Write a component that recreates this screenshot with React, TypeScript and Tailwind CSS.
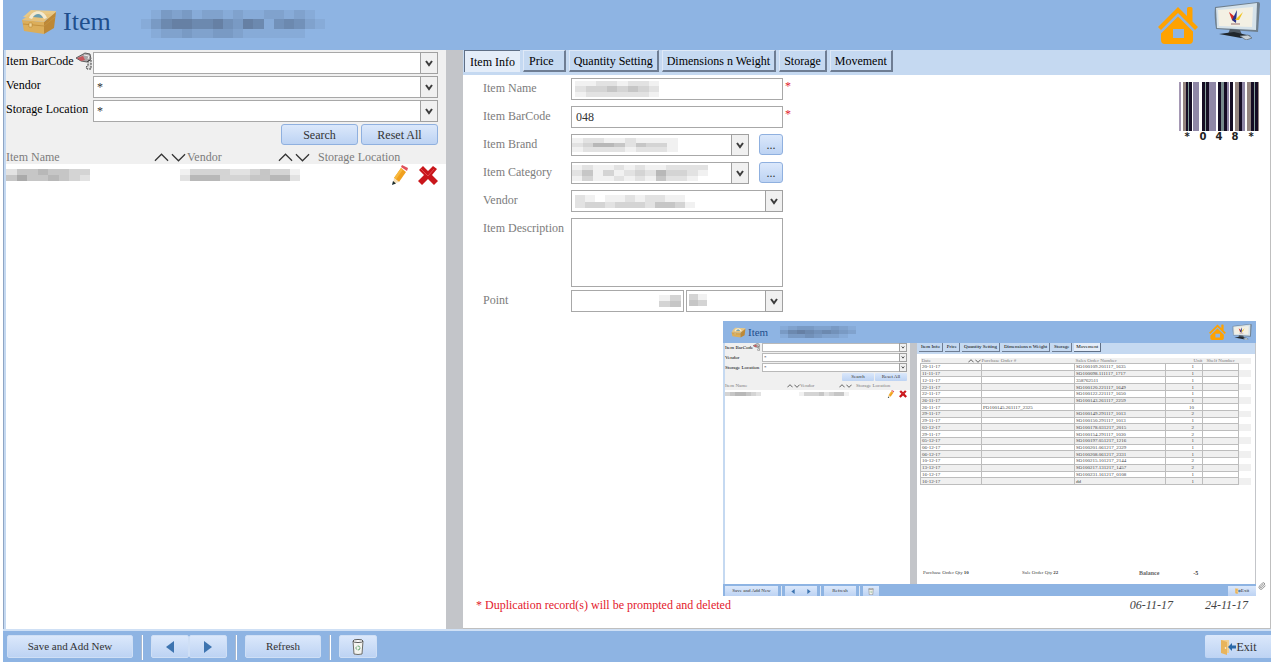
import clsx from "clsx";
import { Paperclip } from "lucide-react";
import { ReactNode, useState } from "react";

const tabs = [
  "Item Info",
  "Price",
  "Quantity Setting",
  "Dimensions n Weight",
  "Storage",
  "Movement",
];

const movements = [
  ["20-11-17", "", "SO100109.201117_1635", "1"],
  ["11-11-17", "", "SO100098.111117_1717", "1"],
  ["12-11-17", "", "358762511", "1"],
  ["22-11-17", "", "SO100120.221117_1649", "1"],
  ["22-11-17", "", "SO100122.221117_1650", "1"],
  ["26-11-17", "", "SO100143.261117_2259", "1"],
  ["26-11-17", "PO100145.261117_2325", "", "10"],
  ["29-11-17", "", "SO100149.291117_1013", "2"],
  ["29-11-17", "", "SO100150.291117_1013", "1"],
  ["03-12-17", "", "SO100178.031217_2015", "2"],
  ["29-11-17", "", "SO100154.291117_1030", "2"],
  ["05-12-17", "", "SO100197.051217_1216", "1"],
  ["06-12-17", "", "SO100201.061217_2329", "1"],
  ["06-12-17", "", "SO100208.061217_2331", "1"],
  ["10-12-17", "", "SO100215.101217_2144", "2"],
  ["13-12-17", "", "SO100217.131217_1457", "2"],
  ["16-12-17", "", "SO100231.161217_0108", "1"],
  ["16-12-17", "", "dd", "1"],
];

// x, width, colour
const bars: [number, number, string][] = [
  [0, 2, "#a598b4"],
  [4, 3, "#94857f"],
  [7, 2, "#150d24"],
  [9, 1, "#7d9a94"],
  [10, 3, "#150d24"],
  [14, 6, "#8f87a6"],
  [23, 3, "#150d24"],
  [26, 1, "#86a09a"],
  [27, 3, "#150d24"],
  [30, 7, "#8f87a6"],
  [39, 3, "#150d24"],
  [42, 3, "#768b8c"],
  [45, 3, "#150d24"],
  [48, 2, "#8f87a6"],
  [51, 3, "#150d24"],
  [56, 4, "#94857f"],
  [60, 3, "#150d24"],
  [63, 3, "#8f87a6"],
  [68, 4, "#94857f"],
  [72, 3, "#150d24"],
  [75, 1, "#86a09a"],
  [76, 3, "#150d24"],
  [79, 1, "#94857f"],
];

// Each digit is the darkness of one cell
function Mosaic({
  rows,
  className,
  color = "#555555",
}: {
  rows: string[];
  className?: string;
  color?: string;
}) {
  return (
    <svg
      viewBox={`0 0 ${rows[0].length} ${rows.length}`}
      preserveAspectRatio="none"
      shapeRendering="crispEdges"
      className={clsx("pointer-events-none", className)}
      aria-hidden="true"
    >
      {rows.map((row, y) =>
        row
          .split("")
          .map((cell, x) => (
            <rect
              key={`${x}-${y}`}
              x={x}
              y={y}
              width="1"
              height="1"
              fill={color}
              opacity={Number(cell) / 12}
            />
          )),
      )}
    </svg>
  );
}

function ToolboxIcon({ className }: { className?: string }) {
  return (
    <svg viewBox="0 0 36 27" className={className} aria-hidden="true">
      <path d="M2 9 10 2l25 1-2 8z" fill="#e9c987" />
      <path d="M1 12 23 14 23 26 3 23z" fill="#dcae5a" />
      <path d="M23 14 35 4 33 20 23 26z" fill="#bd8836" />
      <path d="M1 12 9 6 31 6 23 14z" fill="#e8c27a" />
      <path d="M8 10C11 1 23 1 26 10l-3 1C20 5 14 5 11 11z" fill="#f4ead0" />
      <path d="M12 9C15 5 20 5 22 10z" fill="#6e9fae" />
      <path d="M2 16 23 18 34 9" fill="none" stroke="#c4923f" />
      <path d="M8 15h3v4H8z" fill="#efd596" stroke="#b07c2c" strokeWidth=".5" />
    </svg>
  );
}

function HomeIcon({ className }: { className?: string }) {
  return (
    <svg viewBox="0 0 40 38" className={className} aria-hidden="true">
      <path
        d="M20 1 29 10V2.500Q29 1 30.500 1H33Q34.500 1 34.500 2.500V15.500L40 21 37 24 20 7 3 24 0 21z"
        fill="#ffa200"
      />
      <path
        d="M20 10.500 35 25.500V34Q35 38 31 38H7Q3 38 3 34V27.500zM15 23V32H26V23Z"
        fill="#ffa200"
        fillRule="evenodd"
      />
    </svg>
  );
}

function MonitorIcon({ className }: { className?: string }) {
  return (
    <svg viewBox="0 0 46 38" className={className} aria-hidden="true">
      <path d="M1 5 44 0Q46 0 46 2L44 30 2 27Q0 14 1 5z" fill="#6f7f8d" />
      <path d="M2 6 43 1 42 28 3 26z" fill="#d5e2ea" />
      <path d="M4 8 39 5 38 25 5 24z" fill="#f3f0e4" />
      <path d="m15 10 6 5v5l-3-2z" fill="#d62b22" />
      <path d="m23 8-1 13-4-3z" fill="#27348a" />
      <path d="m21 18 8-8-4 8z" fill="#f1c21a" />
      <path d="M17 22h9" stroke="#9a6f6f" />
      <path d="m16 27 10 1 2 5-14-1z" fill="#4d5761" />
      <path d="M5 32 20 30 37 34 27 36z" fill="#20262b" />
      <path d="m26 34 8-1 4 3-6 2z" fill="#c7d0d6" stroke="#5c666e" strokeWidth=".7" />
    </svg>
  );
}

function ScannerIcon({ className }: { className?: string }) {
  return (
    <svg viewBox="0 0 16 18" className={className} aria-hidden="true">
      <path d="M0 6 9 1l5 1 1 5-4 3-6-1z" fill="#a9a6a8" stroke="#444" strokeWidth=".8" />
      <path d="m1 6 6-2 2 4-4 1z" fill="#c9565c" />
      <path d="m8 3 5 1-1 3" fill="none" stroke="#eee" />
      <path d="m12 9 3-1v9h-4l-1-2 2-1z" fill="#ddd" stroke="#333" strokeDasharray="2 1" />
    </svg>
  );
}

function PencilIcon({ className }: { className?: string }) {
  return (
    <svg viewBox="0 0 16 20" className={className} aria-hidden="true">
      <path d="m9 3 5 4-7 10-5-4z" fill="#f0a01e" />
      <path d="m9 3 2 1.500-7 10L2 13z" fill="#f8b83c" />
      <path d="m9 2 1-2 6 3-1 3z" fill="#e0525c" />
      <path d="m2 13 5 4-6 2z" fill="#f5dfb8" />
      <path d="m1 16 3 2.500L0 20z" fill="#1b2b2b" />
    </svg>
  );
}

function DeleteIcon({ className }: { className?: string }) {
  return (
    <svg viewBox="0 0 20 19" className={className} aria-hidden="true">
      <path
        d="M1 4 5 0 10 5 15 0 19 3 14 9 20 15 16 19 10 13 4 19 0 15 6 9z"
        fill="#c9161b"
      />
      <path d="m3 3 7 7 6-7" fill="none" stroke="#e2494c" />
    </svg>
  );
}

function TrashIcon({ className }: { className?: string }) {
  return (
    <svg viewBox="0 0 12 16" className={className} aria-hidden="true">
      <path d="M1 2 2 15q4 1 8 0l1-13z" fill="#f4f4f0" stroke="#6d6d68" />
      <ellipse cx="6" cy="2" rx="5" ry="1.500" fill="#fff" stroke="#555" />
      <circle cx="6" cy="9" r="2" fill="none" stroke="#62a36c" strokeDasharray="3 1" />
    </svg>
  );
}

function ExitIcon({ className }: { className?: string }) {
  return (
    <svg viewBox="0 0 16 16" className={className} aria-hidden="true">
      <path d="M1 1h8v13H1z" fill="#f0cf93" />
      <path d="m1 1 6 2v13l-6-2z" fill="#e8b45c" />
      <circle cx="5.500" cy="9" r=".8" fill="#fff" />
      <path d="m8 8 4-4v2.500h4v3h-4V12z" fill="#2b69a8" />
    </svg>
  );
}

function ArrowIcon({ back, className }: { back?: boolean; className?: string }) {
  return (
    <svg viewBox="0 0 8 12" className={className} aria-hidden="true">
      <path d={back ? "M8 0v12L0 6z" : "M0 0v12l8-6z"} fill="#3d74b0" />
    </svg>
  );
}

function SortArrows({ mini }: { mini?: boolean }) {
  return (
    <span className={clsx("flex", mini ? "gap-px" : "gap-[2px]")}>
      {["m1 8 7-7 7 7", "m1 1 7 7 7-7"].map((d) => (
        <button key={d} type="button" aria-label="Sort">
          <svg
            viewBox="0 0 16 9"
            className={mini ? "h-1 w-[6px]" : "h-[9px] w-[15px]"}
          >
            <path d={d} fill="none" stroke="#333" strokeWidth={mini ? 2 : 1.3} />
          </svg>
        </button>
      ))}
    </span>
  );
}

function SelectBox({
  id,
  label,
  value = "",
  mini,
  className,
  children,
}: {
  id?: string;
  label?: string;
  value?: string;
  mini?: boolean;
  className?: string;
  children?: ReactNode;
}) {
  return (
    <div className={clsx("relative", mini ? "h-[9px]" : "h-[22px]", className)}>
      <select
        id={id}
        aria-label={label}
        className={clsx(
          "block h-full w-full appearance-none border bg-white text-[#333]",
          mini ? "border-[#b9b9b9] px-px" : "border-[#a8a8a8] px-[3px]",
        )}
      >
        <option>{value}</option>
      </select>
      {children}
      <span
        className={clsx(
          "pointer-events-none absolute inset-y-0 right-0 flex items-center justify-center border border-[#a0a0a0] bg-[#f0f0f0]",
          mini ? "w-2" : "w-[18px]",
        )}
      >
        <svg
          viewBox="0 0 8 7"
          className={mini ? "h-[3px] w-1" : "h-[7px] w-2"}
          aria-hidden="true"
        >
          <path d="m1 1 3 4 3-4" fill="none" stroke="#3c3c3c" strokeWidth="2" />
        </svg>
      </span>
    </div>
  );
}

function BlueButton({
  children,
  className,
  label,
}: {
  children: ReactNode;
  className?: string;
  label?: string;
}) {
  return (
    <button
      type="button"
      aria-label={label}
      className={clsx(
        "flex items-center justify-center bg-gradient-to-b from-[#dbe8fb] to-[#bdd3f3] text-[#333]",
        className,
      )}
    >
      {children}
    </button>
  );
}

function TabBar({ mini, initial }: { mini?: boolean; initial: string }) {
  const [active, setActive] = useState(initial);

  return (
    <div
      role="tablist"
      className={clsx(
        "flex bg-[#c5d9f1]",
        mini ? "h-[11px] gap-[2px] pl-[2px]" : "h-[25px] gap-[3px] pl-px",
      )}
    >
      {tabs.map((tab) => (
        <button
          key={tab}
          type="button"
          role="tab"
          aria-selected={tab === active}
          onClick={() => setActive(tab)}
          className={clsx(
            "whitespace-nowrap text-black",
            mini
              ? "h-[9px] border-r border-b px-[2px] leading-[8px]"
              : "h-[22px] border-t border-l leading-[18px]",
            !mini &&
              (tab === "Price"
                ? "pr-[10px] pl-[5px]"
                : tab === "Item Info"
                  ? "px-[5px]"
                  : "px-1"),
            tab === active
              ? "border-[#5f6f86] bg-[#e4edf9]"
              : mini
                ? "border-[#6e7d93] bg-[#c5d9f1]"
                : "border-r-2 border-b-2 border-t-[#dfe9f7] border-l-[#dfe9f7] border-r-[#6e7d93] border-b-[#6e7d93] bg-[#c5d9f1]",
          )}
        >
          {tab}
        </button>
      ))}
    </div>
  );
}

function Barcode() {
  return (
    <div className="w-20">
      <svg viewBox="0 0 80 49" className="block h-[49px] w-20" role="img" aria-label="Barcode">
        {bars.map(([x, width, fill]) => (
          <rect key={x} x={x} y="0" width={width} height="49" fill={fill} />
        ))}
      </svg>
      <div className="grid grid-cols-5 text-center font-['DejaVu_Sans',sans-serif] text-[10px] leading-[12px] font-bold text-[#222]">
        {"*048*".split("").map((char, i) => (
          <span key={i}>{char}</span>
        ))}
      </div>
    </div>
  );
}

function SearchPanel() {
  const filters = [
    { id: "f-barcode", label: "Item BarCode", value: "" },
    { id: "f-vendor", label: "Vendor", value: "*" },
    { id: "f-storage", label: "Storage Location", value: "*" },
  ];

  return (
    <section className="bg-white">
      <div className="bg-[#f0f0f0]">
        <div className="flex flex-col gap-[2px] pt-[2px] pr-2 pb-[2px]">
          {filters.map((filter) => (
            <div key={filter.id} className="flex">
              <label
                htmlFor={filter.id}
                className="flex w-[87px] shrink-0 leading-[18px] whitespace-nowrap text-black"
              >
                {filter.label}
                {filter.id === "f-barcode" && (
                  <ScannerIcon className="ml-[2px] h-[18px] w-4" />
                )}
              </label>
              <SelectBox id={filter.id} value={filter.value} className="flex-1" />
            </div>
          ))}
        </div>
        <div className="flex justify-end gap-[3px] pr-2">
          {["Search", "Reset All"].map((text) => (
            <BlueButton
              key={text}
              className="h-[21px] w-[77px] rounded-[3px] border border-[#8fb0df]"
            >
              {text}
            </BlueButton>
          ))}
        </div>
        <div className="grid h-[19px] grid-cols-[181px_131px_1fr] items-end leading-[14px] text-[#7c7c7c]">
          <div className="flex items-center justify-between pr-px">
            Item Name
            <SortArrows />
          </div>
          <div className="flex items-center justify-between pr-2">
            Vendor
            <SortArrows />
          </div>
          <div>Storage Location</div>
        </div>
      </div>
      <div className="grid grid-cols-[174px_1fr_auto] items-center pt-px pr-2">
        <Mosaic rows={["24454433", "46445432"]} className="h-3 w-[84px]" />
        <Mosaic
          rows={["133332234331", "255533344552"]}
          className="h-3 w-[120px]"
        />
        <div className="flex items-center gap-[10px]">
          <button type="button" aria-label="Edit">
            <PencilIcon className="h-5 w-4" />
          </button>
          <button type="button" aria-label="Delete">
            <DeleteIcon className="h-[19px] w-5" />
          </button>
        </div>
      </div>
    </section>
  );
}

function FormRow({
  id,
  label,
  children,
}: {
  id: string;
  label: string;
  children: ReactNode;
}) {
  return (
    <div className="flex">
      <label
        htmlFor={id}
        className="w-[88px] shrink-0 leading-5 whitespace-nowrap text-[#7c7c7c]"
      >
        {label}
      </label>
      {children}
    </div>
  );
}

function Required() {
  return <span className="ml-[2px] leading-[16px] text-[#e3202c]">*</span>;
}

const inputClass =
  "block h-[22px] w-[212px] border border-[#a8a8a8] bg-white px-1 text-[#333]";

function ItemForm() {
  return (
    <form className="flex flex-col gap-[6px]">
      <FormRow id="name" label="Item Name">
        <div className="relative">
          <input id="name" className={inputClass} />
          <Mosaic
            rows={["11221221", "23343432", "12222221"]}
            className="absolute top-[3px] left-1 h-4 w-[84px]"
          />
        </div>
        <Required />
      </FormRow>
      <FormRow id="barcode" label="Item BarCode">
        <input id="barcode" defaultValue="048" className={inputClass} />
        <Required />
      </FormRow>
      <FormRow id="brand" label="Item Brand">
        <SelectBox id="brand" className="w-[178px]">
          <Mosaic
            rows={["1221121111", "2355424331", "1222212221"]}
            className="absolute top-1 left-px h-[14px] w-[106px]"
          />
        </SelectBox>
        <BlueButton
          label="Browse brands"
          className="ml-[10px] h-[21px] w-6 rounded-[3px] border border-[#8fb0df]"
        >
          ...
        </BlueButton>
      </FormRow>
      <FormRow id="category" label="Item Category">
        <SelectBox id="category" className="w-[178px]">
          <Mosaic
            rows={["1211212112222", "2413123253321", "1311212142210"]}
            className="absolute top-[3px] left-px h-4 w-[136px]"
          />
        </SelectBox>
        <BlueButton
          label="Browse categories"
          className="ml-[10px] h-[21px] w-6 rounded-[3px] border border-[#8fb0df]"
        >
          ...
        </BlueButton>
      </FormRow>
      <FormRow id="vendor" label="Vendor">
        <SelectBox id="vendor" className="w-[212px]">
          <Mosaic
            rows={["210112122110", "233233324431"]}
            className="absolute top-[5px] left-1 h-[13px] w-[120px]"
          />
        </SelectBox>
      </FormRow>
      <div className="flex flex-col gap-[3px]">
        <FormRow id="description" label="Item Description">
          <textarea
            id="description"
            className="block h-[69px] w-[212px] resize-none border border-[#a8a8a8] bg-white p-1 text-[#333]"
          />
        </FormRow>
        <FormRow id="point" label="Point">
          <div className="relative">
            <input
              id="point"
              className="block h-[22px] w-[113px] border border-[#a8a8a8] bg-white px-1 text-right"
            />
            <Mosaic
              rows={["13", "34"]}
              className="absolute top-[5px] right-[3px] h-3 w-[22px]"
            />
          </div>
          <SelectBox label="Point unit" className="ml-[2px] w-[97px]">
            <Mosaic
              rows={["31", "43"]}
              className="absolute top-1 left-[3px] h-3 w-[18px]"
            />
          </SelectBox>
        </FormRow>
      </div>
    </form>
  );
}

function MiniSearchPanel() {
  return (
    <section className="bg-white">
      <div className="bg-[#f0f0f0] pr-[3px]">
        <div className="flex flex-col gap-px">
          {["Item BarCode", "Vendor", "Storage Location"].map((label, i) => (
            <div key={label} className="flex">
              <label
                htmlFor={`mini-${i}`}
                className="flex w-[37px] leading-[9px] whitespace-nowrap text-black"
              >
                {label}
                {i === 0 && <ScannerIcon className="h-2 w-[7px]" />}
              </label>
              <SelectBox
                id={`mini-${i}`}
                mini
                value={i === 0 ? "" : "*"}
                className="flex-1"
              />
            </div>
          ))}
        </div>
        <div className="mt-px flex justify-end gap-px">
          <BlueButton className="h-2 w-8 rounded-[1px]">Search</BlueButton>
          <BlueButton className="h-2 w-8 rounded-[1px]">Reset All</BlueButton>
        </div>
        <div className="grid h-[9px] grid-cols-[75px_56px_1fr] items-center text-[#7c7c7c]">
          <div className="flex items-center justify-between">
            Item Name
            <SortArrows mini />
          </div>
          <div className="flex items-center justify-between pr-1">
            Vendor
            <SortArrows mini />
          </div>
          <div>Storage Location</div>
        </div>
      </div>
      <div className="grid grid-cols-[74px_1fr_auto] items-center pr-[3px]">
        <Mosaic rows={["3455432"]} className="h-1 w-9" />
        <Mosaic rows={["1333423441"]} className="h-1 w-[50px]" />
        <div className="flex items-center gap-1">
          <PencilIcon className="h-2 w-2" />
          <DeleteIcon className="h-2 w-2" />
        </div>
      </div>
    </section>
  );
}

function MovementTable() {
  const cell = "border border-[#bdbdbd] p-0 px-px";

  return (
    <table className="h-[127px] w-full table-fixed border-collapse text-[5px] leading-[5px] text-[#444]">
      <colgroup>
        <col className="w-[61px]" />
        <col className="w-[93px]" />
        <col className="w-[91px]" />
        <col className="w-[37px]" />
        <col className="w-[36px]" />
        <col />
      </colgroup>
      <thead>
        <tr className="bg-[#f0f0f0] text-left text-[#7c7c7c]">
          <th className="p-0 px-px font-normal">
            <span className="flex items-center justify-between">
              Date <SortArrows mini />
            </span>
          </th>
          <th className="p-0 font-normal">Purchase Order #</th>
          <th className="p-0 px-px font-normal">Sales Order Number</th>
          <th className="p-0 text-right font-normal">Unit</th>
          <th className="p-0 pl-1 font-normal whitespace-nowrap">
            Shelf Number
          </th>
          <th className="p-0" />
        </tr>
      </thead>
      <tbody>
        {movements.map(([date, purchase, sale, unit], i) => (
          <tr key={i} className="odd:bg-white even:bg-[#f0f0f0]">
            <td className={cell}>{date}</td>
            <td className={cell}>{purchase}</td>
            <td className={cell}>{sale}</td>
            <td className={clsx(cell, "pr-2 text-right")}>{unit}</td>
            <td className={cell} />
            <td className="p-0" />
          </tr>
        ))}
      </tbody>
    </table>
  );
}

function MiniWindow() {
  const separator = <span className="mx-[3px] h-full w-px bg-[#dde8f6]" />;

  return (
    <div className="flex h-[275px] w-[533px] flex-col overflow-hidden bg-white text-[5px] leading-[6px]">
      <header className="flex h-[22px] items-center bg-[#8eb4e3] pl-2">
        <ToolboxIcon className="h-[11px] w-[15px]" />
        <h2 className="ml-[2px] text-[11px] leading-[18px] text-[#1f4e8c]">Item</h2>
        <Mosaic
          rows={["123322321", "356545432", "133432210"]}
          color="#3d4c66"
          className="ml-3 h-3 w-[76px]"
        />
        <HomeIcon className="ml-auto h-4 w-[17px]" />
        <MonitorIcon className="mr-1 ml-[6px] h-4 w-5" />
      </header>
      <div className="grid flex-1 grid-cols-[185px_7px_1fr] border-l-2 border-[#c5d9f1]">
        <MiniSearchPanel />
        <div className="bg-[#c3c5c9]" />
        <section className="flex flex-col border-r border-[#c3c5c9]">
          <TabBar mini initial="Movement" />
          <div className="mt-1 pr-1 pl-[3px]">
            <MovementTable />
          </div>
          <dl className="mt-auto mb-2 grid grid-cols-[99px_117px_1fr] pl-[6px] text-[#444]">
            <div className="flex gap-px">
              <dt>Purchase Order Qty</dt>
              <dd className="font-bold">10</dd>
            </div>
            <div className="flex gap-px">
              <dt>Sale Order Qty</dt>
              <dd className="font-bold">22</dd>
            </div>
            <div className="flex gap-[34px] text-[6px]">
              <dt className="font-bold text-[#666]">Balance</dt>
              <dd className="font-bold">-5</dd>
            </div>
          </dl>
        </section>
      </div>
      <footer className="flex h-3 items-stretch bg-[#8eb4e3] pt-[2px] pl-[2px]">
        <BlueButton className="w-[53px]">Save and Add New</BlueButton>
        {separator}
        <BlueButton label="Previous" className="w-4">
          <ArrowIcon back className="h-[5px] w-1" />
        </BlueButton>
        <BlueButton label="Next" className="w-4">
          <ArrowIcon className="h-[5px] w-1" />
        </BlueButton>
        {separator}
        <BlueButton className="w-8">Refresh</BlueButton>
        {separator}
        <BlueButton label="Recycle bin" className="w-4">
          <TrashIcon className="h-[7px] w-[6px]" />
        </BlueButton>
        <BlueButton className="ml-auto w-7">
          <ExitIcon className="h-[6px] w-[6px]" />
          Exit
        </BlueButton>
      </footer>
    </div>
  );
}

function Separator() {
  return (
    <span className="mx-2 my-[2px] w-[2px] border-r border-white bg-[#a9b9cf]" />
  );
}

function Toolbar() {
  const button = "h-[23px] rounded-[2px] border border-[#cfdff5]";

  return (
    <footer className="ml-[3px] flex h-[33px] border-t-2 border-[#cfe0f5] bg-[#8eb4e3] pl-1 text-[11px]">
      <div className="flex flex-1 items-stretch pt-[2px]">
        <BlueButton className={clsx(button, "mt-[2px] w-[126px]")}>
          Save and Add New
        </BlueButton>
        <Separator />
        <BlueButton label="Previous" className={clsx(button, "mt-[2px] w-[38px]")}>
          <ArrowIcon back className="h-3 w-2" />
        </BlueButton>
        <BlueButton label="Next" className={clsx(button, "mt-[2px] w-[38px]")}>
          <ArrowIcon className="h-3 w-2" />
        </BlueButton>
        <Separator />
        <BlueButton className={clsx(button, "mt-[2px] w-[76px]")}>Refresh</BlueButton>
        <Separator />
        <BlueButton label="Recycle bin" className={clsx(button, "mt-[2px] w-[38px]")}>
          <TrashIcon className="h-4 w-3" />
        </BlueButton>
        <BlueButton className="mt-[2px] ml-auto h-[23px] w-[66px] rounded-l-[2px] text-[12px]">
          <ExitIcon className="mr-px h-4 w-4" />
          Exit
        </BlueButton>
      </div>
    </footer>
  );
}

export default function App() {
  return (
    <div className="flex min-h-screen flex-col bg-white font-['Liberation_Serif',serif] text-[12px]">
      <header className="ml-[3px] flex h-[50px] items-start bg-[#8eb4e3] pl-[18px]">
        <ToolboxIcon className="mt-2 h-[27px] w-9" />
        <h1 className="ml-[6px] text-[26px] leading-[44px] text-[#1f4e8c]">
          Item
        </h1>
        <Mosaic
          rows={["013231221211221210", "135665564365145421", "012232233211111100"]}
          color="#3d4c66"
          className="mt-[10px] ml-[30px] h-7 w-[184px]"
        />
        <a href="#home" aria-label="Home" className="mt-[6px] ml-auto">
          <HomeIcon className="h-[38px] w-10" />
        </a>
        <MonitorIcon className="mt-[2px] mr-[11px] ml-4 h-[38px] w-[46px]" />
      </header>

      <main className="ml-[3px] grid flex-1 grid-cols-[440fr_17px_808fr] border-l border-[#8fa5c4] pl-[2px] shadow-[inset_2px_0_0_#c5d9f1]">
        <SearchPanel />
        <div className="bg-[#c3c5c9]" />
        <section className="relative flex flex-col border-r border-b border-[#bfbfbf] bg-white">
          <TabBar initial="Item Info" />
          <div className="flex items-start justify-between pt-[3px] pr-[11px] pl-5">
            <ItemForm />
            <div className="pt-1">
              <Barcode />
            </div>
          </div>
          <div className="mt-auto flex items-center justify-between pt-[280px] pr-[22px] pb-4 pl-[13px] leading-[14px]">
            <p className="text-[#e3202c]">
              * Duplication record(s) will be prompted and deleted
            </p>
            <div className="flex gap-8 text-[#444] italic">
              <time>06-11-17</time>
              <time>24-11-17</time>
            </div>
          </div>
          <div className="absolute right-1 bottom-8 flex items-end gap-[2px]">
            <MiniWindow />
            <button type="button" aria-label="Attachment" className="mb-[6px]">
              <Paperclip className="h-2 w-2 text-[#666]" />
            </button>
          </div>
        </section>
      </main>

      <Toolbar />
    </div>
  );
}
